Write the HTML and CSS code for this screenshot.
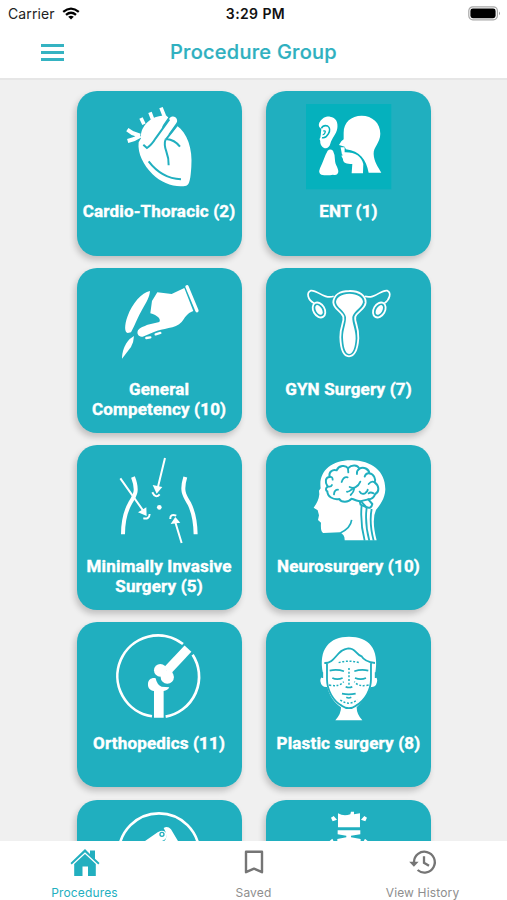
FILE: index.html
```html
<!DOCTYPE html>
<html lang="en">
<head>
    <meta charset="UTF-8">
    <title>Procedure Group</title>
    <link rel="stylesheet" href="styles.css">
</head>
<body>
    <div class="screen">
        <div class="status-bar">
            <div class="carrier">
                <span>Carrier</span>
                <svg width="18" height="13" viewBox="0 0 18 13" fill="none" stroke="#000" stroke-width="2.3">
                    <path d="M1.2 4.8Q9 -1.6 16.8 4.8M4 7.8Q9 3.6 14 7.8"/>
                    <path d="M9 12.6L6.2 9.8Q9 7.6 11.8 9.8Z" fill="#000" stroke="none"/>
                </svg>
            </div>
            <div class="time">3:29 PM</div>
            <svg class="battery" width="33" height="15" viewBox="0 0 33 15">
                <rect x="0.8" y="0.8" width="28.6" height="13" rx="4" fill="#fff" stroke="#a8a8a8" stroke-width="1.2"/>
                <rect x="2.4" y="2.6" width="25.2" height="9.6" rx="2.4" fill="#000"/>
                <path d="M31 5.4Q33 7.3 31 9.2Z" fill="#999"/>
            </svg>
        </div>

        <div class="header">
            <div class="menu"><span></span><span></span><span></span></div>
            <h1>Procedure Group</h1>
        </div>

        <div class="content">
            <div class="grid">
                <div class="card">
                    <svg class="icon" viewBox="139 57 256 256">
                        <path class="w" d="M214 160C211 130 236 100 268 94L288 90L322 122C352 143 370 190 365 246C363 278 360 300 350 302C318 309 276 295 248 267C222 242 203 205 207 172Z"/>
                        <path class="ws" stroke-width="11" d="M223 118L214 99M249 103L241 82M284 93L274 68"/>
                        <path class="ws" stroke-width="12" stroke-linejoin="round" d="M173 134L188 144L211 152M174 168L194 162L212 152"/>
                        <path class="ts" stroke-width="36" stroke-linecap="round" d="M311 107L295 130"/>
                        <path class="ws" stroke-width="25" stroke-linecap="round" d="M310 107L258 180"/>
                        <path class="ts" stroke-width="6" d="M221 179L232 189Q246 180 258 160L299 103M322 121L290 162Q315 164 331 185M288 162C277 192 299 198 297 241M237 229Q276 280 334 283"/>
                    </svg>
                    <div class="label">Cardio-Thoracic (2)</div>
                </div>
                <div class="card">
                    <svg class="icon" viewBox="138 57 256 256">
                        <rect x="138" y="57" width="256" height="256" fill="#05b1bd"/>
                        <path class="w" d="M179 112C186 99 198 94 210 95C228 97 235 112 232 130C229 148 216 159 211 176C208 188 199 192 191 188C182 184 178 171 183 160C193 165 204 156 209 146C217 127 211 119 199 120C191 121 187 126 185 132C177 128 174 121 179 112Z"/>
                        <path class="w" d="M179 112L210 104L222 128L205 162L185 172L179 164L183 132Z"/>
                        <path d="M184 130Q190 119 203 123Q214 131 205 147Q197 161 186 158" fill="none" stroke="#05b1bd" stroke-width="4.5"/>
                        <path d="M190 138Q198 136 195 143T188 149" fill="none" stroke="#05b1bd" stroke-width="4"/>
                        <path d="M175 130L184 133L181 158L173 160Z" fill="#05b1bd"/>
                        <path class="w" d="M203 197Q211 190 219 197Q225 208 225 225C225 240 236 249 235 261Q232 273 219 269Q201 273 184 269Q174 265 180 250C189 231 194 213 203 197Z"/>
                        <path class="w" d="M251 163V143C251 112 274 92 305 92C337 92 361 114 361 146C361 174 340 185 341 207C342 230 354 245 364 263H326C319 224 300 198 258 193L254 185L237 180L244 169Z"/>
                        <path class="w" d="M253 202C286 201 304 214 310 237L309 265H275L277 237C260 237 249 235 249 222L244 212L250 210L246 203Z"/>
                        <path class="w" d="M242 187H254V209H246Z"/>
                    </svg>
                    <div class="label">ENT (1)</div>
                </div>
                <div class="card">
                    <svg class="icon" viewBox="139 57 256 256">
                        <path class="w" d="M241 87C216 92 188 124 174 162C163 192 165 212 174 213L184 211C198 186 204 165 218 142C231 119 240 104 241 87Z"/>
                        <path class="w" d="M180 231L193 222Q192 242 184 255L157 290C157 270 164 248 180 231Z"/>
                        <path class="w" d="M263 91L306 96L344 78L371 147C352 153 344 170 336 180C318 201 278 198 253 210L219 224C207 226 200 215 205 205C210 196 224 193 234 188L269 180C275 172 264 160 242 154L247 117Z"/>
                        <path class="ws" stroke-width="10" stroke-linecap="round" d="M352 74L382 146"/>
                        <path class="ws" stroke-width="7" stroke-linecap="round" d="M230 228L242 226M258 217L272 213"/>
                    </svg>
                    <div class="label">General<br>Competency (10)</div>
                </div>
                <div class="card">
                    <svg class="icon" viewBox="138 57 256 256">
                        <path class="ws" stroke-width="5" d="M221 103C190 113 172 82 152 86C139 92 142 112 162 124M315 103C345 113 362 82 382 86C395 92 390 112 373 124"/>
                        <g class="ws" stroke-width="5.5">
                            <ellipse cx="177" cy="144" rx="17" ry="24" transform="rotate(-30 177 144)"/>
                            <ellipse cx="358" cy="144" rx="17" ry="24" transform="rotate(30 358 144)"/>
                        </g>
                        <g class="w">
                            <ellipse cx="177" cy="144" rx="9" ry="16" transform="rotate(-30 177 144)"/>
                            <ellipse cx="358" cy="144" rx="9" ry="16" transform="rotate(30 358 144)"/>
                        </g>
                        <path class="ws" stroke-width="5.5" d="M268 87C297 86 318 101 317 122C315 143 292 148 286 164C282 180 297 193 295 229C293 259 286 283 267 283C248 283 242 256 241 226C240 193 254 181 250 164C244 147 222 143 220 121C221 99 240 87 268 87Z"/>
                        <path class="w" d="M268 95C292 95 309 106 309 120C307 135 281 148 277 165C276 184 288 205 287 230C285 256 280 275 267 276C255 275 250 253 249 226C249 202 259 185 258 165C254 146 229 136 228 120C229 106 245 95 268 95Z"/>
                    </svg>
                    <div class="label">GYN Surgery (7)</div>
                </div>
                <div class="card">
                    <svg class="icon" viewBox="139 54 256 256">
                        <path class="ws" stroke-width="12" d="M190 111C206 153 196 166 182 188Q160 227 160 283M347 111C334 153 344 166 359 191Q377 227 378 283"/>
                        <path class="ws" stroke-width="6" d="M152 115L222 214M286 54L264 145M336 309L315 240"/>
                        <path class="w" d="M205 217L230 202L231 228ZM249 135L278 141L261 161ZM303 252L317 231L332 248Z"/>
                        <path class="ws" stroke-width="6" d="M221 235Q239 239 240 222M248 157Q258 177 270 163M302 237Q301 220 320 227"/>
                        <circle class="w" cx="269" cy="202" r="7"/>
                    </svg>
                    <div class="label">Minimally Invasive<br>Surgery (5)</div>
                </div>
                <div class="card">
                    <svg class="icon" viewBox="138 54 256 256">
                        <path class="w" d="M254 301Q255 285 240 277L190 279Q181 277 183 248L174 240L177 226L173 211L161 203Q176 184 178 163L177 152L182 145C175 96 212 60 275 61C336 62 377 94 376 149C375 176 359 196 348 210Q334 239 350 301Z"/>
                        <path class="ts" stroke-width="5.5" d="M305 196Q300 248 314 302M320 204Q314 250 328 302M335 207Q327 248 341 302"/>
                        <path class="ts" stroke-width="5" d="M241 279Q272 265 275 240"/>
                        <path class="ts" stroke-width="6" stroke-linejoin="round" d="M203 140C193 126 197 111 209 111C205 96 218 87 230 91C236 76 257 74 264 85C276 73 293 75 298 86C311 79 327 87 328 100C343 103 348 118 344 127C359 138 358 156 346 162C341 174 335 179 325 178L337 192Q334 207 320 202L302 194L299 184C284 181 278 176 275 176C265 188 244 188 238 177C219 180 202 170 202 154C196 151 197 144 203 140Z"/>
                        <path class="ts" stroke-width="5.5" stroke-linecap="round" d="M209 111Q218 109 218 119M203 139Q213 142 216 135M222 163Q223 149 234 149M245 126Q251 109 263 112M264 86L265 97M298 87Q289 92 291 102M301 125C294 142 281 147 269 141M278 146Q265 157 261 155M283 145Q281 157 272 165M328 100Q318 98 314 110M344 127Q335 121 326 132M299 155Q304 165 315 160Q325 151 323 149M326 160Q331 155 341 160M299 184L325 178M306 187L320 202"/>
                    </svg>
                    <div class="label">Neurosurgery (10)</div>
                </div>
                <div class="card">
                    <svg class="icon" viewBox="139 54 256 256">
                        <path class="ws" stroke-width="8" d="M247 298A122 122 0 1 1 340 81M369 113A122 122 0 0 1 288 299"/>
                        <path class="ws" stroke-width="28" d="M355 95L292 162"/>
                        <circle class="w" cx="272" cy="160" r="19"/>
                        <circle class="w" cx="293" cy="180" r="20"/>
                        <path class="w" d="M253 302V222C241 220 234 212 235 200C236 188 246 181 258 184Q262 204 276 209L299 211Q294 221 282 222V302Z"/>
                    </svg>
                    <div class="label">Orthopedics (11)</div>
                </div>
                <div class="card">
                    <svg class="icon" viewBox="138 54 256 256">
                        <path class="w" d="M189 169C174 96 209 59 267 59C326 59 359 94 346 169L347 180Q356 187 348 204Q342 212 332 210C323 239 300 260 290 271Q290 292 307 310H226Q244 290 243 271C224 258 207 235 202 210Q184 212 181 192Q181 181 189 178Z"/>
                        <path class="ts" stroke-width="5.5" d="M193 138C228 139 229 97 265 94C288 94 285 110 305 118Q314 134 345 138M201 138V187C201 220 220 252 245 266Q267 281 288 266C316 250 333 219 333 187V138"/>
                        <path class="ts" stroke-width="5" d="M187 166V183M347 166V183M209 161Q231 156 252 163M283 163Q304 156 325 161M217 183Q231 190 248 183M285 183Q303 190 318 183M246 230Q266 234 287 230M259 241Q266 245 274 241M257 209Q267 214 277 209"/>
                        <path class="ts" stroke-width="4.5" stroke-dasharray="6 5" d="M236 137Q267 128 299 137M267 153V207M207 204Q238 211 251 194M326 204Q296 211 283 194M241 249Q266 268 292 249"/>
                    </svg>
                    <div class="label">Plastic surgery (8)</div>
                </div>
                <div class="card">
                    <svg class="icon" viewBox="139 69 256 256">
                        <circle class="ws" stroke-width="8" cx="268" cy="191" r="121"/>
                        <path class="w" d="M219 158L264 127Q279 116 290 129Q296 146 277 153L268 170H210Z"/>
                        <path class="w" d="M282 114Q294 107 304 118L328 158H277Q301 145 282 114Z"/>
                        <circle class="ts" stroke-width="4" cx="277" cy="133" r="6"/>
                    </svg>
                </div>
                <div class="card">
                    <svg class="icon" viewBox="138 69 256 256">
                        <path class="w" d="M234 70Q251 80 271 73L273 65H282V73L300 70V112H234Z"/>
                        <path class="w" d="M213 83L221 78L231 89L218 94ZM321 83L313 78L303 89L316 94ZM233 121H301V133L273 137V142L302 147V165H232V147L259 142V137L233 133ZM209 153L217 146L224 160H209ZM323 153L315 146L308 160H323Z"/>
                    </svg>
                </div>
            </div>
        </div>

        <div class="tab-bar">
            <div class="tab active">
                <svg width="30" height="28" viewBox="0 0 30 28" fill="#22afbf">
                    <path d="M15 0L20 5V1.5H25V9.8L29.5 14L28.3 15.6L15 3.3L1.7 15.6L.5 14Z"/>
                    <path d="M15 5L25.8 15V27H18V17.5H12.5V27H4.2V15Z"/>
                </svg>
                <span>Procedures</span>
            </div>
            <div class="tab">
                <svg width="30" height="28" viewBox="0 0 30 28" fill="none" stroke="#757575" stroke-width="2.4">
                    <path d="M7 2.8H23V23.2L15 19.6L7 23.2Z" stroke-linejoin="round"/>
                </svg>
                <span>Saved</span>
            </div>
            <div class="tab">
                <svg width="30" height="28" viewBox="0 0 30 28" fill="none" stroke="#757575" stroke-width="2.3">
                    <path d="M6 13A10.4 10.4 0 1 1 9.6 21M16 7.2V13.8L21 16.8"/>
                    <path d="M1.2 12.8H10.6L5.9 17.8Z" fill="#757575" stroke="none"/>
                </svg>
                <span>View History</span>
            </div>
        </div>
    </div>
</body>
</html>
```
FILE: styles.css
```css
* {
    box-sizing: border-box;
}
body {
    margin: 0;
    background-color: #f0f0f0;
    font-family: Roboto, "Liberation Sans", sans-serif;
}
.screen {
    width: 507px;
    height: 900px;
    display: flex;
    flex-direction: column;
    overflow: hidden;
}
.status-bar {
    height: 27px;
    padding: 0 6px 0 8px;
    display: grid;
    grid-template-columns: 1fr auto 1fr;
    align-items: center;
    background-color: #fff;
    font-family: Inter, sans-serif;
    font-size: 14px;
    color: #222;
}
.carrier {
    display: flex;
    align-items: center;
    gap: 7px;
    letter-spacing: 0.1px;
}
.time {
    padding-left: 2px;
    font-weight: 600;
    letter-spacing: 0.4px;
    color: #111;
}
.battery {
    justify-self: end;
}
.header {
    height: 53px;
    padding: 0 41px 2px;
    display: grid;
    grid-template-columns: 1fr auto 1fr;
    align-items: center;
    background-color: #fff;
    border-bottom: 2px solid #e6e6e6;
}
.menu {
    width: 23px;
    padding-top: 2px;
    display: flex;
    flex-direction: column;
    gap: 4px;
}
.menu span {
    height: 3px;
    background-color: #35b3c2;
}
h1 {
    margin: 0;
    font-family: Inter, sans-serif;
    font-size: 20px;
    font-weight: 500;
    letter-spacing: 0.25px;
    -webkit-text-stroke: 0.2px;
    color: #2fb0c0;
}
.content {
    flex: 1;
    min-height: 0;
    overflow: hidden;
    padding: 11.2px 76px 0 76.6px;
}
.grid {
    display: grid;
    grid-template-columns: 165px 165px;
    grid-auto-rows: 165px;
    gap: 12.1px 24.4px;
}
.card {
    display: flex;
    flex-direction: column;
    align-items: center;
    padding-top: 13px;
    background-color: #20afbf;
    border-radius: 20px;
    box-shadow: -2px 4px 6px rgba(0, 0, 0, 0.2);
}
.icon {
    width: 85.3px;
    height: 85.3px;
    flex: none;
    overflow: visible;
}
.w {
    fill: #fff;
}
.ws {
    fill: none;
    stroke: #fff;
}
.ts {
    fill: none;
    stroke: #20afbf;
}
.label {
    margin-top: 12px;
    font-size: 17px;
    font-weight: 700;
    line-height: 20.5px;
    letter-spacing: 0.17px;
    text-align: center;
    white-space: nowrap;
    -webkit-text-stroke: 0.4px #fff;
    color: #fff;
}
.tab-bar {
    height: 59px;
    flex: none;
    display: grid;
    grid-template-columns: repeat(3, 1fr);
    background-color: #fff;
}
.tab {
    display: flex;
    flex-direction: column;
    align-items: center;
    padding-top: 8px;
    gap: 8px;
    font-family: Inter, sans-serif;
    font-size: 12px;
    line-height: 15px;
    letter-spacing: 0.15px;
    color: #8e8e8e;
}
.tab.active {
    color: #22afbf;
}
```
